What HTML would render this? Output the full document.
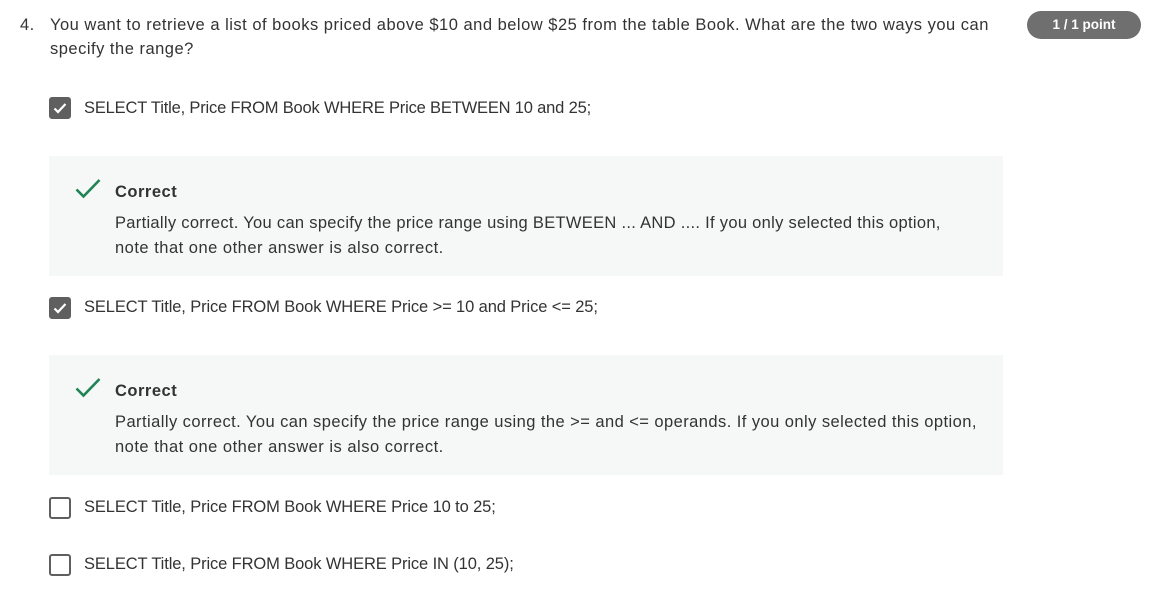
<!DOCTYPE html>
<html><head><meta charset="utf-8"><style>
body{margin:0;width:1156px;height:609px;background:#fff;position:relative;overflow:hidden;font-family:"Liberation Sans",sans-serif;color:#333;}
.t{position:absolute;white-space:nowrap;font-size:16.5px;letter-spacing:0.5px;line-height:24px;}
.s{letter-spacing:-0.12px;}
.cb{position:absolute;left:49px;width:18px;height:18px;border:2px solid #5f5f5f;border-radius:3px;background:#fff;}
.cb.on{background:#5f5f5f;}
.fb{position:absolute;left:49px;width:954px;height:120px;background:#f5f8f7;}
.badge{position:absolute;left:1027px;top:11px;width:114px;height:28px;border-radius:14px;background:#6f6f6f;color:#fff;font-weight:bold;font-size:13.5px;line-height:28px;text-align:center;}
</style></head><body>
<div class="t" style="left:20px;top:13px;">4.</div>
<div class="t" style="left:50px;top:13px;">You want to retrieve a list of books priced above $10 and below $25 from the table Book. What are the two ways you can</div>
<div class="t" style="left:50px;top:37px;">specify the range?</div>
<div class="badge">1 / 1 point</div>

<div class="cb on" style="top:97px;"><svg width="18" height="18" viewBox="0 0 18 18"><path d="M3.5 9.5l3.5 3.5 7.5-8" stroke="#fff" stroke-width="2.2" fill="none"/></svg></div>
<div class="t s" style="left:84px;top:96px;letter-spacing:-0.18px;">SELECT Title, Price FROM Book WHERE Price BETWEEN 10 and 25;</div>

<div class="fb" style="top:156px;"></div>
<svg style="position:absolute;left:75px;top:178px" width="26" height="22" viewBox="0 0 26 22"><path d="M1.5 11.5l7 7L24.5 2" stroke="#1f8354" stroke-width="2.6" fill="none"/></svg>
<div class="t" style="left:115px;top:180px;font-weight:bold;">Correct</div>
<div class="t" style="left:115px;top:211px;letter-spacing:0.3px;">Partially correct. You can specify the price range using BETWEEN ... AND .... If you only selected this option,</div>
<div class="t" style="left:115px;top:236px;">note that one other answer is also correct.</div>

<div class="cb on" style="top:297px;"><svg width="18" height="18" viewBox="0 0 18 18"><path d="M3.5 9.5l3.5 3.5 7.5-8" stroke="#fff" stroke-width="2.2" fill="none"/></svg></div>
<div class="t s" style="left:84px;top:295px;">SELECT Title, Price FROM Book WHERE Price &gt;= 10 and Price &lt;= 25;</div>

<div class="fb" style="top:355px;"></div>
<svg style="position:absolute;left:75px;top:377px" width="26" height="22" viewBox="0 0 26 22"><path d="M1.5 11.5l7 7L24.5 2" stroke="#1f8354" stroke-width="2.6" fill="none"/></svg>
<div class="t" style="left:115px;top:379px;font-weight:bold;">Correct</div>
<div class="t" style="left:115px;top:410px;letter-spacing:0.44px;">Partially correct. You can specify the price range using the &gt;= and &lt;= operands. If you only selected this option,</div>
<div class="t" style="left:115px;top:435px;">note that one other answer is also correct.</div>

<div class="cb" style="top:497px;"></div>
<div class="t s" style="left:84px;top:495px;">SELECT Title, Price FROM Book WHERE Price 10 to 25;</div>

<div class="cb" style="top:554px;"></div>
<div class="t s" style="left:84px;top:552px;">SELECT Title, Price FROM Book WHERE Price IN (10, 25);</div>
</body></html>
